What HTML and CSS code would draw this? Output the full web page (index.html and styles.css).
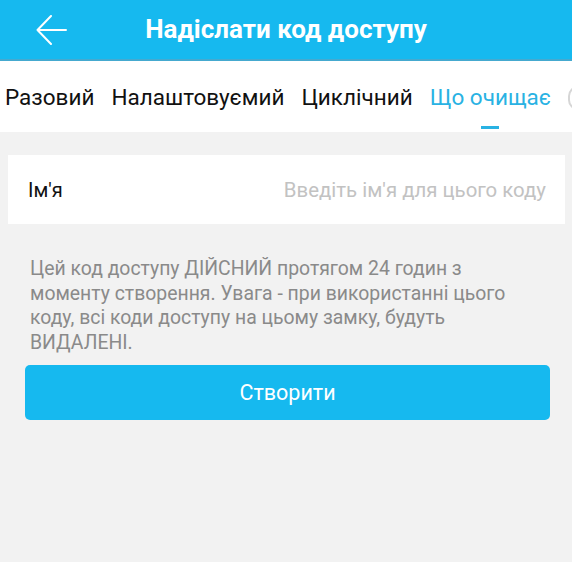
FILE: index.html
```html
<!DOCTYPE HTML>
<html>
<head>
    <meta name="viewport" content="width=device-width, initial-scale=1.0">
    <link rel="stylesheet" href="styles.css">
</head>
<body>
    <div class="header">
        <div class="back">
            <svg width="32" height="30" viewBox="0 0 32 30">
                <path d="M15 1 L1.5 15 L15 29 M1.5 15 H30" fill="none" stroke="#fff" stroke-width="2" stroke-linecap="round" stroke-linejoin="round"/>
            </svg>
        </div>
        <div class="title">Надіслати код доступу</div>
    </div>

    <div class="tabs">
        <div class="tab">Разовий</div>
        <div class="tab">Налаштовуємий</div>
        <div class="tab">Циклічний</div>
        <div class="tab active">Що очищає</div>
        <div class="tab-more"></div>
    </div>

    <div class="content">
        <div class="field">
            <div class="label">Ім'я</div>
            <div class="placeholder">Введіть ім'я для цього коду</div>
        </div>
        <p class="note">Цей код доступу ДІЙСНИЙ протягом 24 годин з моменту створення. Увага - при використанні цього коду, всі коди доступу на цьому замку, будуть ВИДАЛЕНІ.</p>
        <div class="button">Створити</div>
    </div>
</body>
</html>
```

FILE: styles.css
```css
* {
    padding: 0;
    margin: 0;
    box-sizing: border-box;
}
body {
    width: 572px;
    height: 562px;
    overflow: hidden;
    background-color: #f2f2f2;
    font-family: Roboto, "Noto Sans", sans-serif;
}
.header {
    height: 61px;
    background-color: #16b9ef;
    border-bottom: 2px solid #45a9cf;
    display: flex;
    align-items: center;
}
.back {
    width: 32px;
    height: 30px;
    margin-left: 36px;
}
.back svg {
    display: block;
}
.title {
    flex: 1;
    text-align: center;
    color: #fff;
    font-size: 26px;
    font-weight: 700;
    margin-right: 72px;
    margin-left: 4px;
    padding-bottom: 2px;
}
.tabs {
    height: 71px;
    background-color: #fff;
    display: flex;
    align-items: flex-start;
    padding-left: 5px;
    padding-top: 23px;
    overflow: hidden;
    white-space: nowrap;
}
.tab {
    font-size: 22.5px;
    line-height: 26px;
    color: #111;
    margin-right: 17px;
    position: relative;
    flex-shrink: 0;
}
.tab.active {
    color: #29b2e3;
}
.tab.active::after {
    content: "";
    position: absolute;
    left: 50%;
    margin-left: -9px;
    top: 42px;
    width: 18px;
    height: 3px;
    background-color: #29b2e3;
}
.tab-more {
    flex-shrink: 0;
    width: 14px;
    height: 24px;
    margin-top: 2px;
    border: 2px solid #d6d6d6;
    border-right: none;
    border-radius: 10px 0 0 10px;
}
.content {
    padding-top: 23px;
}
.field {
    margin: 0 7px 0 8px;
    height: 69px;
    background-color: #fff;
    display: flex;
    align-items: center;
    justify-content: space-between;
    padding: 0 19px 0 20px;
}
.label {
    font-size: 20px;
    color: #111;
}
.placeholder {
    font-size: 20.4px;
    color: #c2c2c2;
}
.note {
    margin: 33px 28px 0 30px;
    font-size: 19.4px;
    line-height: 24.5px;
    color: #8a8a8a;
}
.button {
    margin: 10px 22px 0 25px;
    height: 55px;
    border-radius: 5px;
    background-color: #16b9ef;
    color: #fff;
    font-size: 21.5px;
    display: flex;
    align-items: center;
    justify-content: center;
}
```
